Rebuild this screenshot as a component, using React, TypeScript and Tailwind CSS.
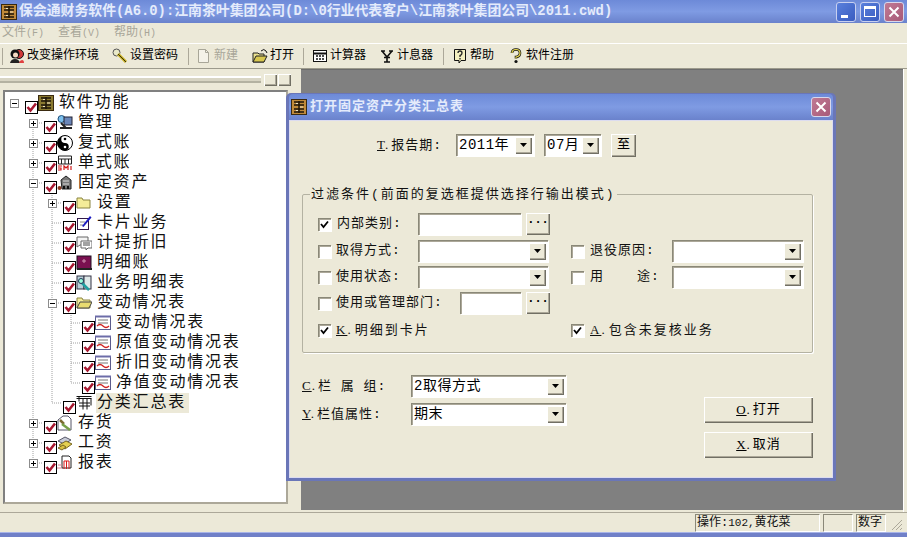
import type { ReactNode } from 'react';

const BEVEL = 'bg-[#ece9d8] shadow-[inset_1px_1px_0_#fff,inset_-1px_-1px_0_#716f64,inset_-2px_-2px_0_#aca899]';
const SUNKEN = 'bg-white shadow-[inset_1px_1px_0_#8a8878,inset_2px_2px_0_#aca899,1px_1px_0_#fff]';

const Svg = ({ children, w = 16, h = 16, className = '' }: { children: ReactNode; w?: number; h?: number; className?: string }) => (
    <svg width={w} height={h} viewBox={`0 0 ${w} ${h}`} className={`shrink-0 ${className}`}>
        {children}
    </svg>
);

// abacus used for app + dialog icon
const AbacusIcon = ({ bg = '#c08a3a' }: { bg?: string }) => (
    <Svg>
        <rect x="0.5" y="0.5" width="15" height="15" fill={bg} stroke="#3a2a10" />
        <path d="M3 3h10M3 6h10M3 10h10M3 13h10M8 2v12" stroke="#1c1408" strokeWidth="1.4" />
        <path d="M5 4.5h2M9 8h3M5 11.5h2" stroke="#f0e6c8" />
    </Svg>
);

const ManageIcon = () => (
    <Svg>
        <circle cx="4.5" cy="4" r="3.5" fill="#7cc0ee" stroke="#20507c" />
        <rect x="7" y="2" width="8" height="8" fill="#6a86b8" stroke="#223" />
        <path d="M4 8 9 13M3 13h12" stroke="#222" strokeWidth="2" />
    </Svg>
);
const YinYangIcon = () => (
    <Svg>
        <circle cx="8" cy="8" r="7.5" fill="#fff" stroke="#000" />
        <path d="M8 .5a7.5 7.5 0 0 0 0 15 3.75 3.75 0 0 0 0-7.500 3.75 3.75 0 0 1 0-7.500z" fill="#000" />
        <circle cx="8" cy="4" r="1.300" fill="#000" />
        <circle cx="8" cy="12" r="1.300" fill="#fff" />
    </Svg>
);
const LedgerIcon = () => (
    <Svg>
        <path d="M1.500 1h13v8h-13zM1.500 4h13M4.500 4v5M8 4v5M11.500 4v5" fill="#fff" stroke="#222" />
        <path d="M1 11h4M1 13h3v2H1M7 15v-4l2 2 2-2v4M14 11v4" fill="none" stroke="#d01818" strokeWidth="1.200" />
    </Svg>
);
const AssetIcon = () => (
    <Svg>
        <path d="M5 14 4 5l5-4 5 4v9z" fill="#777" stroke="#222" />
        <path d="M6 6h6M6 9h6" stroke="#ddd" />
        <circle cx="2.500" cy="13" r="2" fill="#8c3a20" />
        <rect x="6" y="11" width="2" height="3" fill="#111" />
        <rect x="10" y="11" width="2" height="3" fill="#111" />
    </Svg>
);
const FolderIcon = ({ open = false }: { open?: boolean }) => (
    <Svg>
        <path d="M1 13V3h5l1 2h7v8z" fill="#f4ec98" stroke="#8a8440" />
        {open && <path d="M1 13 4 7h12l-3 6z" fill="#e8dc70" stroke="#444" />}
    </Svg>
);
const CardIcon = () => (
    <Svg>
        <rect x="1.500" y="3.500" width="11" height="11" fill="#fff" stroke="#301848" />
        <path d="M4 7h5M4 10h3" stroke="#888" />
        <path d="M6 11 14 1l1.500 1.500-8 9.500z" fill="#1a1ac0" />
    </Svg>
);
const ChatIcon = () => (
    <Svg>
        <path d="M1 2h11v8H4l-3 2z" fill="#f4f4f4" stroke="#666" />
        <path d="M5 6h11v7h-4l-2 2v-2H5z" fill="#fff" stroke="#666" />
        <path d="M7 8h7M7 10h7" stroke="#444" />
    </Svg>
);
const BookIcon = () => (
    <Svg>
        <rect x="1" y="1" width="14" height="13" fill="#7a1050" stroke="#201020" />
        <path d="M1 14h15" stroke="#222" strokeWidth="2" />
        <path d="M6 6h4M8 4v4" stroke="#d090b0" />
    </Svg>
);
const DetailIcon = () => (
    <Svg>
        <rect x="1" y="1" width="7" height="13" fill="#b8d0d8" stroke="#334" />
        <rect x="8" y="1" width="7" height="13" fill="#dfe8e8" stroke="#334" />
        <path d="M4 6l9 9" stroke="#20a0a0" strokeWidth="2.500" />
        <circle cx="5" cy="6" r="2.500" fill="#9fd" stroke="#235" />
    </Svg>
);
const ReportIcon = () => (
    <Svg>
        <rect x="0.500" y="1.500" width="15" height="13" fill="#fff" stroke="#5c5c8c" />
        <path d="M0 1.500h16" stroke="#6c6ca8" strokeWidth="2" />
        <path d="M3 5h10M3 8h10" stroke="#777" />
        <path d="M2 11q3-3 6 0t6 0" fill="none" stroke="#d02020" strokeWidth="1.300" />
    </Svg>
);
const GridIcon = () => (
    <Svg>
        <path d="M.5 1.500h15M.5 3.500h15M3 1.500v5M7 3.500v11M11 3.500v11M15 3.500v7M3 8h11M3 11h11" fill="none" stroke="#111" />
    </Svg>
);
const HammerIcon = () => (
    <Svg>
        <path d="M1 5 6 1h5l3 3v11H1z" fill="#fff" stroke="#556" />
        <path d="M3 5l4 4" stroke="#7c6a30" strokeWidth="2.500" />
        <path d="M5 9l8 6" stroke="#78a048" strokeWidth="2.500" />
    </Svg>
);
const CoinsIcon = () => (
    <Svg>
        <path d="M1 6 8 2l6 3-7 4z" fill="#c8ccd8" stroke="#556" />
        <path d="M2 10l7-4 6 3-7 5z" fill="#e4d050" stroke="#776620" />
        <path d="M1 13l5-3 3 2-4 3z" fill="#d8c040" stroke="#776620" />
    </Svg>
);
const RedReportIcon = () => (
    <Svg>
        <path d="M5 1h7l2 2v10H5z" fill="#fff" stroke="#222" />
        <path d="M7 6h5v8M7 6v8M9.500 6v8" stroke="#d81818" fill="none" />
        <path d="M0 13h5M1 10h4" stroke="#d88090" />
    </Svg>
);

const PeopleIcon = () => (
    <Svg>
        <circle cx="10" cy="6" r="4.500" fill="#d03838" stroke="#111" />
        <circle cx="6" cy="6" r="4.500" fill="#111" />
        <circle cx="6.500" cy="7" r="2.500" fill="#f4d8c0" />
        <path d="M1 15q1-4 5-4t5 4z" fill="#222" />
        <path d="M10 15q1-3 3-3t2 3z" fill="#e04040" />
    </Svg>
);
const KeyIcon = () => (
    <Svg>
        <circle cx="4.500" cy="4.500" r="3.500" fill="#e8e8c8" stroke="#555" />
        <path d="M6 6l8 8" stroke="#c8b020" strokeWidth="3" />
        <path d="M6 6l8 8" stroke="#111" strokeWidth=".8" />
    </Svg>
);
const NewDocIcon = () => (
    <Svg>
        <path d="M2.500 1.500h7l3 3v10h-10z" fill="#f4f2e8" stroke="#a8a698" />
        <path d="M9.500 1.500v3h3" fill="none" stroke="#a8a698" />
    </Svg>
);
const OpenIcon = () => (
    <Svg>
        <path d="M1 14V5h5l1 1h5v8z" fill="#e8e090" stroke="#222" />
        <path d="M1 14 4 8h11l-3 6z" fill="#d8c850" stroke="#222" />
        <path d="M9 3q3-3 5 0l1 2" fill="none" stroke="#111" />
    </Svg>
);
const CalcIcon = () => (
    <Svg>
        <rect x="1.500" y="2.500" width="13" height="11" fill="#fff" stroke="#111" />
        <path d="M1 5.500h14" stroke="#111" strokeWidth="2" />
        <path d="M4 8h2M7 8h2M10 8h2M4 11h2M7 11h2M10 11h2" stroke="#111" strokeWidth="1.400" />
    </Svg>
);
const InterestIcon = () => (
    <Svg>
        <path d="M2 3h4M10 3h4M3 3l5 6 5-6M8 9v5M5 14h6M5 9.500h6" fill="none" stroke="#111" strokeWidth="1.600" />
    </Svg>
);
const HelpBoxIcon = () => (
    <Svg>
        <path d="M2.500 1.500h11v11H9l-2 2.500v-2.500H2.500z" fill="#f4f0c0" stroke="#111" />
        <path d="M6 5q0-2 2-2t2 2-2 2.500V9M8 10v1.500" fill="none" stroke="#222" strokeWidth="1.300" />
    </Svg>
);
const QuestionIcon = () => (
    <Svg>
        <path d="M4 5q0-3.500 4-3.500T12 5t-4 4v1.500" fill="none" stroke="#111" strokeWidth="2.600" />
        <path d="M4 5q0-3.500 4-3.500T12 5t-4 4v1.500" fill="none" stroke="#e8d850" strokeWidth="1.200" />
        <circle cx="8" cy="13.500" r="1.600" fill="#111" />
    </Svg>
);

const CloseButton = ({ size }: { size: string }) => (
    <div className={`${size} rounded-[3px] border border-[#d8d8ec] bg-linear-to-br from-[#c07a94] to-[#a85a78] flex items-center justify-center`}>
        <svg width="12" height="12" viewBox="0 0 12 12">
            <path d="M1.500 1.500l9 9M10.500 1.500l-9 9" stroke="#fff" strokeWidth="2" />
        </svg>
    </div>
);

const ToolItem = ({ icon, label, disabled, className = '' }: { icon: ReactNode; label: string; disabled?: boolean; className?: string }) => (
    <div className={`flex items-center gap-[2px] ${className}`}>
        {icon}
        <span className={`text-[12px] whitespace-nowrap ${disabled ? 'text-[#a8a698]' : 'text-black'}`}>{label}</span>
    </div>
);

const Divider = ({ className }: { className: string }) => (
    <div className={`w-[2px] h-[17px] border-l border-[#aca899] border-r-white ${className}`} />
);

type TreeNode = { label: string; depth: number; icon: ReactNode; toggle?: '+' | '-'; selected?: boolean };

const TREE: TreeNode[] = [
    { label: '软件功能', depth: 0, toggle: '-', icon: <AbacusIcon bg="#8a7a30" /> },
    { label: '管理', depth: 1, toggle: '+', icon: <ManageIcon /> },
    { label: '复式账', depth: 1, toggle: '+', icon: <YinYangIcon /> },
    { label: '单式账', depth: 1, toggle: '+', icon: <LedgerIcon /> },
    { label: '固定资产', depth: 1, toggle: '-', icon: <AssetIcon /> },
    { label: '设置', depth: 2, toggle: '+', icon: <FolderIcon /> },
    { label: '卡片业务', depth: 2, icon: <CardIcon /> },
    { label: '计提折旧', depth: 2, icon: <ChatIcon /> },
    { label: '明细账', depth: 2, icon: <BookIcon /> },
    { label: '业务明细表', depth: 2, icon: <DetailIcon /> },
    { label: '变动情况表', depth: 2, toggle: '-', icon: <FolderIcon open /> },
    { label: '变动情况表', depth: 3, icon: <ReportIcon /> },
    { label: '原值变动情况表', depth: 3, icon: <ReportIcon /> },
    { label: '折旧变动情况表', depth: 3, icon: <ReportIcon /> },
    { label: '净值变动情况表', depth: 3, icon: <ReportIcon /> },
    { label: '分类汇总表', depth: 2, selected: true, icon: <GridIcon /> },
    { label: '存货', depth: 1, toggle: '+', icon: <HammerIcon /> },
    { label: '工资', depth: 1, toggle: '+', icon: <CoinsIcon /> },
    { label: '报表', depth: 1, toggle: '+', icon: <RedReportIcon /> },
];

const DEPTH_PAD = ['pl-[5px]', 'pl-[24px]', 'pl-[43px]', 'pl-[62px]'];

const TreeRow = ({ node }: { node: TreeNode }) => (
    <div className={`relative flex h-[20px] items-start ${DEPTH_PAD[node.depth]}`}>
        <div className="w-[15px] shrink-0 pt-[6px]">
            {node.toggle && (
                <div className="w-[9px] h-[9px] border border-[#8c8c8c] bg-white flex items-center justify-center">
                    <svg width="7" height="7" viewBox="0 0 7 7">
                        <path d={node.toggle === '+' ? 'M1 3.500h5M3.500 1v5' : 'M1 3.500h5'} stroke="#000" />
                    </svg>
                </div>
            )}
        </div>
        <div className="w-[13px] h-[13px] mt-[8px] shrink-0 border border-black bg-white">
            <svg width="11" height="11" viewBox="0 0 11 11">
                <path d="M1.500 5l3 3.500L10 1.500" fill="none" stroke="#a81830" strokeWidth="2.600" />
            </svg>
        </div>
        <div className="w-[16px] h-[16px] mt-[2px] shrink-0 relative">{node.icon}</div>
        <div className={`ml-[4px] h-[20px] pl-[1px] pr-[3px] text-[16px] leading-[20px] tracking-[1.8px] text-[#111] whitespace-nowrap ${node.selected ? 'bg-[#ece9d8]' : ''}`}>
            {node.label}
        </div>
    </div>
);

const ArrowButton = () => (
    <div className={`w-[17px] h-[17px] ${BEVEL} flex items-center justify-center shrink-0`}>
        <svg width="7" height="4" viewBox="0 0 7 4"><path d="M0 0h7L3.500 4z" fill="#000" /></svg>
    </div>
);

const Combo = ({ width, text, big }: { width: string; text?: string; big?: boolean }) => (
    <div className={`${width} h-[22px] ${SUNKEN} flex items-center pl-[3px] pr-[2px] shrink-0`}>
        <span className={`flex-1 whitespace-nowrap ${big ? 'text-[14px]' : 'text-[13px]'} tracking-[0.5px] text-black`}>{text}</span>
        <ArrowButton />
    </div>
);

const Check = ({ checked }: { checked?: boolean }) => (
    <div className={`w-[13px] h-[13px] shrink-0 ${SUNKEN} flex items-center justify-center`}>
        {checked && (
            <svg width="9" height="9" viewBox="0 0 9 9"><path d="M1 4l2.500 3L8 1.500" fill="none" stroke="#000" strokeWidth="1.800" /></svg>
        )}
    </div>
);

const Picker = ({ width }: { width: string }) => (
    <>
        <div className={`${width} h-[22px] ${SUNKEN} shrink-0`} />
        <div className={`w-[24px] h-[22px] ml-[5px] ${BEVEL} flex items-center justify-center text-[12px] leading-none pb-[3px] font-bold shrink-0`}>···</div>
    </>
);

// accelerator letter, then its dot
const Key = ({ k }: { k: string }) => (
    <span className="font-['Liberation_Serif',serif] text-[13px] mr-[2px]">
        <span className="underline">{k}</span>.
    </span>
);

const Label = ({ children, className = '' }: { children: ReactNode; className?: string }) => (
    <span className={`text-[13px] tracking-[1px] text-[#111] whitespace-nowrap ${className}`}>{children}</span>
);

const Dialog = () => (
    <div className="absolute left-[286px] top-[93px] w-[550px] h-[388px] rounded-t-[5px] bg-[#6a76b8] p-[3px] pt-[1px] flex flex-col">
        <div className="h-[26px] shrink-0 rounded-t-[4px] bg-linear-to-b from-[#6d8ad8] via-[#7f9be3] to-[#6a82cc] flex items-center pl-[2px] pr-[2px]">
            <AbacusIcon />
            <span className="ml-[3px] flex-1 text-[13px] font-bold tracking-[1px] text-[#e4ebfb]">打开固定资产分类汇总表</span>
            <CloseButton size="w-[20px] h-[20px]" />
        </div>
        <div className="flex-1 bg-[#ece9d8] border border-[#dcdcf0] flex flex-col pl-[12px]">
            {/* report period */}
            <div className="flex items-center h-[22px] mt-[13px] pl-[75px]">
                <Label className="w-[79px]"><Key k="T" />报告期:</Label>
                <Combo width="w-[78px]" text="2011年" big />
                <div className="w-[10px]" />
                <Combo width="w-[57px]" text="07月" big />
                <div className={`ml-[10px] w-[25px] h-[23px] ${BEVEL} flex items-center justify-center text-[13px]`}>至</div>
            </div>

            {/* filter group */}
            <div className="relative mt-[38px] w-[511px] h-[159px] border border-[#b4b2a2] rounded-[2px] shadow-[1px_1px_0_#fff] flex flex-col pl-[15px]">
                <div className="absolute left-[7px] top-[-9px] px-[1px] bg-[#ece9d8] text-[13px] leading-[17px] tracking-[2px] text-[#111] whitespace-nowrap">
                    过滤条件(前面的复选框提供选择行输出模式)
                </div>
                <div className="flex items-center h-[22px] mt-[18px]">
                    <Check checked />
                    <Label className="ml-[6px] w-[81px]">内部类别:</Label>
                    <Picker width="w-[103px]" />
                </div>
                <div className="flex items-center h-[22px] mt-[5px]">
                    <Check />
                    <Label className="ml-[5px] w-[82px]">取得方式:</Label>
                    <Combo width="w-[130px]" />
                    <div className="ml-[23px]"><Check /></div>
                    <Label className="ml-[6px] w-[82px]">退役原因:</Label>
                    <Combo width="w-[131px]" />
                </div>
                <div className="flex items-center h-[22px] mt-[4px]">
                    <Check />
                    <Label className="ml-[5px] w-[82px]">使用状态:</Label>
                    <Combo width="w-[130px]" />
                    <div className="ml-[23px]"><Check /></div>
                    <Label className="ml-[6px] w-[82px]">用<span className="ml-[33px]">途:</span></Label>
                    <Combo width="w-[131px]" />
                </div>
                <div className="flex items-center h-[22px] mt-[4px]">
                    <Check />
                    <Label className="ml-[5px] w-[124px]">使用或管理部门:</Label>
                    <Picker width="w-[61px]" />
                </div>
                <div className="flex items-center h-[22px] mt-[5px]">
                    <Check checked />
                    <Label className="ml-[5px] w-[235px] tracking-[2px]"><Key k="K" />明细到卡片</Label>
                    <Check checked />
                    <Label className="ml-[6px] tracking-[2px]"><Key k="A" />包含未复核业务</Label>
                </div>
            </div>

            {/* column settings + buttons */}
            <div className="flex mt-[22px]">
                <div className="flex flex-col w-[402px] gap-[6px]">
                    <div className="flex items-center">
                        <Label className="w-[109px]"><Key k="C" />栏 属 组:</Label>
                        <Combo width="w-[155px]" text="2取得方式" big />
                    </div>
                    <div className="flex items-center">
                        <Label className="w-[109px]"><Key k="Y" />栏值属性:</Label>
                        <Combo width="w-[155px]" text="期末" big />
                    </div>
                </div>
                <div className="flex flex-col gap-[9px] mt-[22px]">
                    <div className={`w-[109px] h-[26px] ${BEVEL} flex items-center justify-center text-[13px] tracking-[1px]`}><Key k="O" />打开</div>
                    <div className={`w-[109px] h-[26px] ${BEVEL} flex items-center justify-center text-[13px] tracking-[1px]`}><Key k="X" />取消</div>
                </div>
            </div>
        </div>
    </div>
);

export default function App() {
    return (
        <div className="relative w-[907px] h-[537px] overflow-hidden flex flex-col bg-[#ece9d8] font-['Liberation_Mono','Noto_Sans_CJK_SC',monospace]">
            {/* Title bar */}
            <div className="h-[23px] shrink-0 bg-linear-to-b from-[#6d8ad8] via-[#7f9be3] to-[#6a82cc] flex items-center pl-[1px] pr-[3px]">
                <AbacusIcon />
                <span className="ml-[2px] flex-1 text-[13.87px] font-bold text-[#e4ebfb] whitespace-nowrap">
                    保会通财务软件(A6.0):江南茶叶集团公司(D:\0行业代表客户\江南茶叶集团公司\2011.cwd)
                </span>
                <div className="flex gap-[4px]">
                    <div className="w-[20px] h-[20px] rounded-[3px] border border-[#c8d0f0] bg-linear-to-br from-[#5a80dc] to-[#3a5cc0] flex items-end pl-[4px] pb-[3px]">
                        <div className="w-[7px] h-[3px] bg-white" />
                    </div>
                    <div className="w-[20px] h-[20px] rounded-[3px] border border-[#c8d0f0] bg-linear-to-br from-[#5a80dc] to-[#3a5cc0] flex items-center justify-center">
                        <div className="w-[12px] h-[11px] border border-white border-t-[3px]" />
                    </div>
                    <CloseButton size="w-[20px] h-[20px]" />
                </div>
            </div>

            {/* Menu */}
            <div className="h-[21px] shrink-0 flex items-center pl-[2px] gap-[14px] text-[12px] text-[#a8a698] border-b border-white">
                <span>文件<span className="text-[10px]">(F)</span></span>
                <span>查看<span className="text-[10px]">(V)</span></span>
                <span>帮助<span className="text-[10px]">(H)</span></span>
            </div>

            {/* Toolbar */}
            <div className="h-[25px] shrink-0 flex items-center pl-[2px] border-b border-[#9c9a8c]">
                <Divider className="mr-[5px]" />
                <ToolItem icon={<PeopleIcon />} label="改变操作环境" />
                <ToolItem className="ml-[13px]" icon={<KeyIcon />} label="设置密码" />
                <Divider className="ml-[10px] mr-[6px]" />
                <ToolItem disabled icon={<NewDocIcon />} label="新建" />
                <ToolItem className="ml-[14px]" icon={<OpenIcon />} label="打开" />
                <Divider className="ml-[9px] mr-[7px]" />
                <ToolItem icon={<CalcIcon />} label="计算器" />
                <ToolItem className="ml-[13px]" icon={<InterestIcon />} label="计息器" />
                <Divider className="ml-[10px] mr-[7px]" />
                <ToolItem icon={<HelpBoxIcon />} label="帮助" />
                <ToolItem className="ml-[14px]" icon={<QuestionIcon />} label="软件注册" />
            </div>

            {/* Main */}
            <div className="flex-1 flex min-h-0">
                <div className="w-[301px] shrink-0 flex flex-col pl-[3px] pr-[13px] pb-[8px]">
                    <div className="h-[21px] shrink-0 flex items-center gap-[1px] -ml-[3px] -mr-[11px]">
                        <div className="w-[261px] h-[7px] border-y-2 border-t-[#fff] border-b-[#b4b2a2] bg-[#d8d5c4] mr-[2px]" />
                        <div className={`w-[13px] h-[12px] ${BEVEL}`} />
                        <div className={`w-[13px] h-[12px] ${BEVEL}`} />
                    </div>
                    <div className="relative flex-1 bg-white border-2 border-t-[#808080] border-l-[#808080] border-b-[#aca899] border-r-[#aca899]">
                        <svg className="absolute left-0 top-0" width="280" height="400">
                            <path
                                d="M28 31V371M47 91V311M66 211V291M28 31h10M28 51h10M28 71h10M28 91h10M28 331h10M28 351h10M28 371h10M47 111h10M47 131h10M47 151h10M47 171h10M47 191h10M47 211h10M47 311h10M66 231h10M66 251h10M66 271h10M66 291h10"
                                fill="none"
                                stroke="#a0a0a0"
                                strokeDasharray="1 1"
                            />
                        </svg>
                        <div className="flex flex-col pt-[1px]">
                            {TREE.map((node, i) => (
                                <TreeRow key={i} node={node} />
                            ))}
                        </div>
                    </div>
                </div>
                <div className="flex-1 bg-[#808080] border-t border-[#6c6c6c] mb-[2px]" />
                <div className="w-[4px] shrink-0 border-l border-white bg-[#ece9d8]" />
            </div>

            {/* Status bar */}
            <div className="h-[20px] shrink-0 border-t border-[#aca899] flex items-center justify-end pr-[4px] text-[12px] text-[#111]">
                <div className="w-[125px] h-[18px] border border-t-[#8a8878] border-l-[#8a8878] border-r-white border-b-white pl-[1px] leading-[16px]">操作:<span className="text-[11px]">102,</span>黄花菜</div>
                <div className="w-[30px] h-[18px] ml-[3px] border border-t-[#8a8878] border-l-[#8a8878] border-r-white border-b-white" />
                <div className="w-[30px] h-[18px] ml-[3px] border border-t-[#8a8878] border-l-[#8a8878] border-r-white border-b-white pl-[1px] leading-[16px]">数字</div>
                <svg className="ml-[4px]" width="13" height="16" viewBox="0 0 13 16">
                    <path d="M12 5 2 15M12 9 6 15M12 13l-2 2" stroke="#aca899" />
                </svg>
            </div>

            <div className="h-[5px] shrink-0 bg-[#7080c8] border-t border-[#a8b4e8]" />

            <Dialog />
        </div>
    );
}
